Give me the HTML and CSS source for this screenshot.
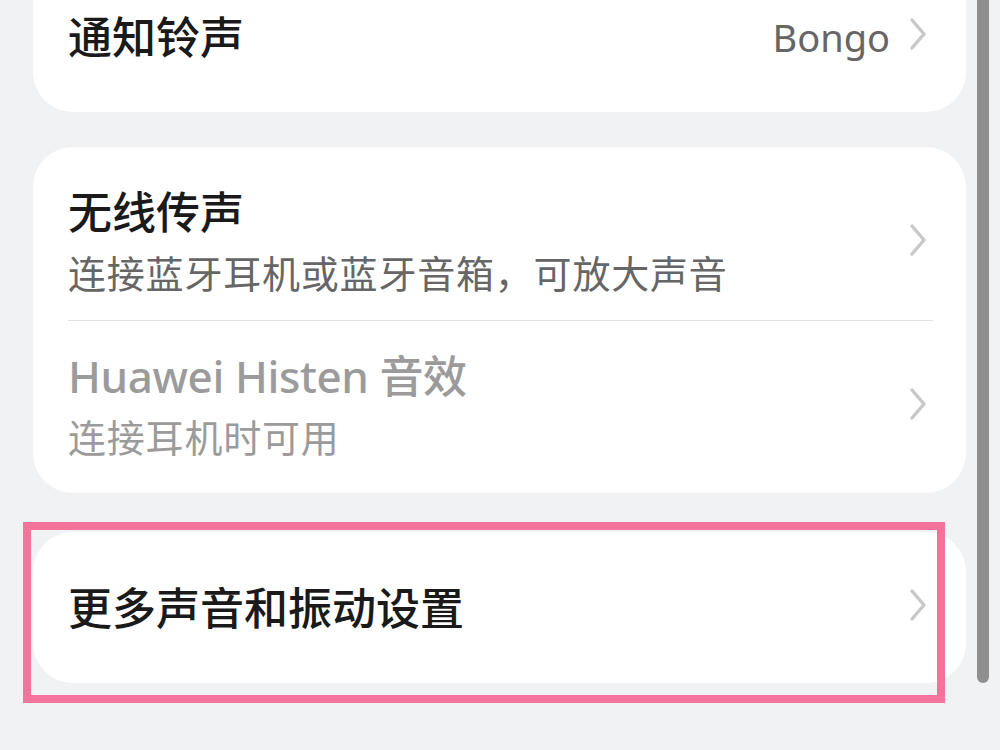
FILE: index.html
```html
<!DOCTYPE html>
<html lang="zh-CN">
<head>
<meta charset="utf-8">
<title>声音和振动</title>
<link rel="stylesheet" href="styles.css">
</head>
<body>
  <div class="list">
    <div class="card card-top">
      <div class="row row-single">
        <div class="title">通知铃声</div>
        <div class="value">Bongo</div>
        <svg class="chevron" viewBox="0 0 18 34"><path d="M3 3 L15 17 L3 31"/></svg>
      </div>
    </div>

    <div class="card card-group">
      <div class="row row-first">
        <div class="text">
          <div class="title">无线传声</div>
          <div class="sub">连接蓝牙耳机或蓝牙音箱，可放大声音</div>
        </div>
        <svg class="chevron" viewBox="0 0 18 34"><path d="M3 3 L15 17 L3 31"/></svg>
      </div>
      <div class="divider"></div>
      <div class="row row-second disabled">
        <div class="text">
          <div class="title latin">Huawei Histen 音效</div>
          <div class="sub">连接耳机时可用</div>
        </div>
        <svg class="chevron" viewBox="0 0 18 34"><path d="M3 3 L15 17 L3 31"/></svg>
      </div>
    </div>

    <div class="card card-more">
      <div class="row row-single">
        <div class="title">更多声音和振动设置</div>
        <svg class="chevron" viewBox="0 0 18 34"><path d="M3 3 L15 17 L3 31"/></svg>
      </div>
      <div class="highlight"></div>
    </div>
  </div>
  <div class="scrollbar"></div>
</body>
</html>
```

FILE: styles.css
```css
html, body {
  height: 100%;
}
body {
  margin: 0;
  overflow: hidden;
  background-color: #f1f2f4;
  font-family: "Noto Sans", "Noto Sans CJK SC", sans-serif;
  color: #1a1a1a;
}
.list {
  margin-top: -38px;
  padding: 0 34px 0 33px;
  display: flex;
  flex-direction: column;
}
.card {
  position: relative;
  background-color: white;
  border-radius: 40px;
  padding: 0 33px 0 35px;
}
.card-top {
  height: 150px;
  display: flex;
  align-items: center;
}
.card-group {
  margin-top: 35px;
  padding-top: 12px;
}
.card-more {
  margin-top: 39px;
  height: 151px;
  display: flex;
  align-items: center;
}
.row {
  display: flex;
  align-items: center;
  width: 100%;
}
.row-first {
  padding: 25px 0 19px;
}
.row-second {
  padding: 27px 0 28px;
}
.text {
  flex: 1;
}
.title {
  font-size: 44px;
  line-height: 56px;
  font-weight: 500;
}
.title.latin {
  letter-spacing: -0.4px;
}
.row-single .title {
  flex: 1;
}
.sub {
  font-size: 38px;
  line-height: 56px;
  margin-top: 5px;
  letter-spacing: 0.8px;
  color: #666666;
}
.disabled .title,
.disabled .sub {
  color: #9b9b9b;
}
.value {
  font-size: 38px;
  color: #666666;
  margin-right: 19px;
}
.chevron {
  width: 18px;
  height: 34px;
  margin-right: 6px;
  margin-bottom: 6px;
  flex-shrink: 0;
}
.chevron path {
  fill: none;
  stroke: #c8c8c8;
  stroke-width: 3.4;
  stroke-linecap: round;
  stroke-linejoin: round;
}
.divider {
  height: 1px;
  background-color: #e2e2e2;
}
.highlight {
  position: absolute;
  top: -10px;
  left: -10px;
  right: 21px;
  bottom: -20px;
  border: 8px solid #f4739a;
}
.scrollbar {
  position: fixed;
  top: -10px;
  left: 977px;
  width: 12px;
  height: 693px;
  border-radius: 6px;
  background-color: #8f8f8f;
}
```
